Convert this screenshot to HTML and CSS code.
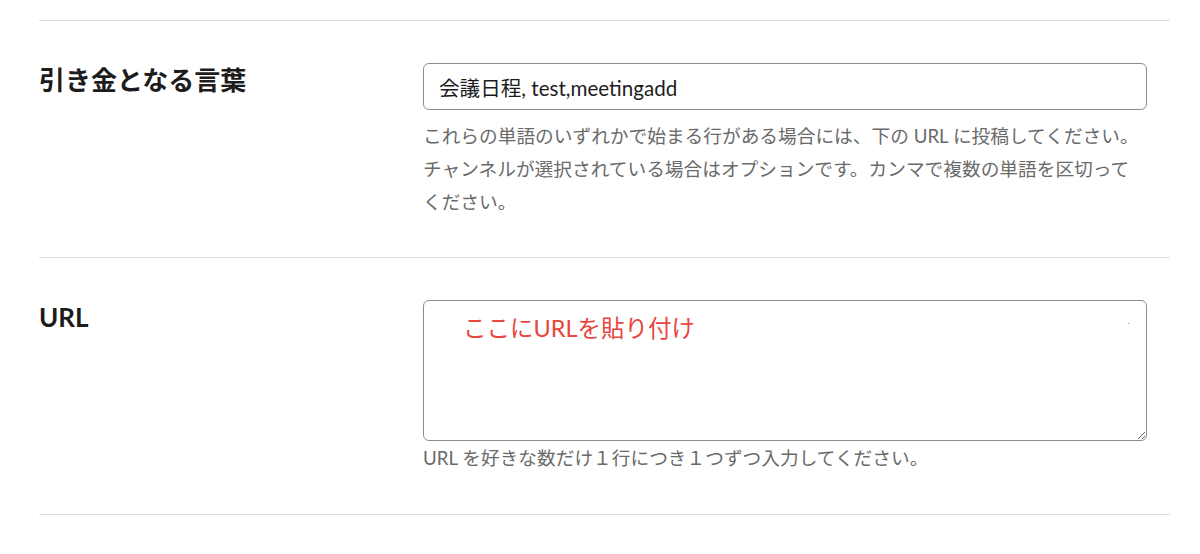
FILE: index.html
```html
<!DOCTYPE html>
<html lang="ja">
<head>
<meta charset="utf-8">
<link rel="stylesheet" href="styles.css">
</head>
<body>
<div class="page">
  <section class="row">
    <div class="label">引き金となる言葉</div>
    <div class="field">
      <input class="text-input" type="text" value="会議日程, test,meetingadd">
      <p class="help">これらの単語のいずれかで始まる行がある場合には、下の URL に投稿してください。<br>チャンネルが選択されている場合はオプションです。カンマで複数の単語を区切って<br>ください。</p>
    </div>
  </section>
  <section class="row row-url">
    <div class="label">URL</div>
    <div class="field">
      <div class="area-wrap">
        <textarea class="text-area"></textarea>
        <span class="annotation">ここにURLを貼り付け</span>
        <span class="speck"></span>
      </div>
      <p class="help help-tight">URL を好きな数だけ１行につき１つずつ入力してください。</p>
    </div>
  </section>
  <div class="rule"></div>
</div>
</body>
</html>
```

FILE: styles.css
```css
html, body {
  margin: 0;
  padding: 0;
  background: #ffffff;
}

body {
  font-family: Lato, "Noto Sans CJK JP", sans-serif;
  color: #1d1c1d;
}

.page {
  padding: 20px 30px 0 39px;
}

.row {
  display: grid;
  grid-template-columns: 384px 724px;
  border-top: 1px solid #dddddd;
  padding: 42px 0 38px;
}

.row-url {
  padding-bottom: 39px;
}

.rule {
  width: 1131px;
  border-top: 1px solid #dddddd;
}

.label {
  font-size: 26px;
  font-weight: 700;
  line-height: 34px;
  margin-top: 0;
  color: #1d1c1d;
}

.field {
  display: flex;
  flex-direction: column;
}

.text-input {
  box-sizing: border-box;
  width: 724px;
  height: 47px;
  border: 1px solid #8d8d8d;
  border-radius: 6px;
  padding: 0 15px;
  font-family: Lato, "Noto Sans CJK JP", sans-serif;
  font-size: 20.6px;
  color: #1d1c1d;
  outline: none;
}

.help {
  margin: 10px 0 0;
  font-size: 18.7px;
  line-height: 33px;
  color: #6a6a6a;
  width: 724px;
}

.help-tight {
  margin-top: 1px;
}

.area-wrap {
  position: relative;
  width: 724px;
  height: 141px;
}

.text-area {
  box-sizing: border-box;
  display: block;
  width: 724px;
  height: 141px;
  border: 1px solid #8d8d8d;
  border-radius: 6px;
  padding: 10px 15px;
  font-family: Lato, "Noto Sans CJK JP", sans-serif;
  font-size: 20px;
  outline: none;
}

.annotation {
  position: absolute;
  left: 40px;
  top: 12px;
  font-size: 23.5px;
  line-height: 32px;
  color: #e8463c;
  pointer-events: none;
}

.speck {
  position: absolute;
  left: 705px;
  top: 23px;
  width: 1px;
  height: 1px;
  background: #999999;
}
```
